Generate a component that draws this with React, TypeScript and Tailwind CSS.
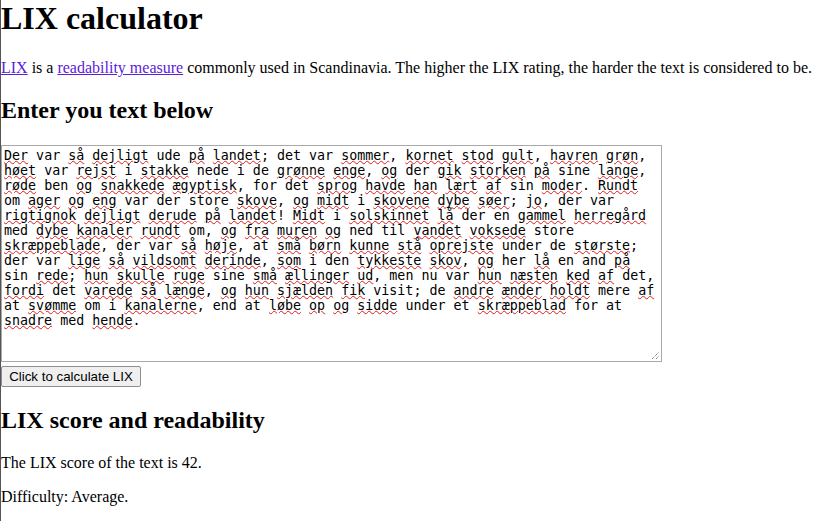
const sample = `Der var så dejligt ude på landet; det var sommer, kornet stod gult, havren grøn, høet var rejst i stakke nede i de grønne enge, og der gik storken på sine lange, røde ben og snakkede ægyptisk, for det sprog havde han lært af sin moder. Rundt om ager og eng var der store skove, og midt i skovene dybe søer; jo, der var rigtignok dejligt derude på landet! Midt i solskinnet lå der en gammel herregård med dybe kanaler rundt om, og fra muren og ned til vandet voksede store skræppeblade, der var så høje, at små børn kunne stå oprejste under de største; der var lige så vildsomt derinde, som i den tykkeste skov, og her lå en and på sin rede; hun skulle ruge sine små ællinger ud, men nu var hun næsten ked af det, fordi det varede så længe, og hun sjælden fik visit; de andre ænder holdt mere af at svømme om i kanalerne, end at løbe op og sidde under et skræppeblad for at snadre med hende.`;

// words the spell checker lets through (everything else gets the red squiggle)
const known = new Set([
  "var", "det", "i", "de", "ben", "for", "om", "store", "med", "her", "and",
  "under", "men", "at", "end", "et", "sin", "den", "visit", "mere", "sine",
  "til", "en", "der", "ude", "nede", "ned", "nu",
]);

function SpellText({ text }: { text: string }) {
  const parts = text.split(/(\p{L}+)/u);
  return (
    <>
      {parts.map((part, i) =>
        /\p{L}/u.test(part) && !known.has(part) ? (
          <span
            key={i}
            className="underline decoration-[#e21b1b] decoration-wavy decoration-[1px] underline-offset-[0px]"
          >
            {part}
          </span>
        ) : (
          <span key={i}>{part}</span>
        )
      )}
    </>
  );
}

export default function App() {
  return (
    <div className="min-h-[521px] border-l border-[#555] bg-white font-['Liberation_Serif',serif] text-black">
      <h1 className="mb-[22px] text-[32px] font-bold leading-[normal]">LIX calculator</h1>

      <p className="mb-4 text-base leading-[normal]">
        <a href="#" className="text-[#5b21d9] underline">
          LIX
        </a>{" "}
        is a{" "}
        <a href="#" className="text-[#5b21d9] underline">
          readability measure
        </a>{" "}
        commonly used in Scandinavia. The higher the LIX rating, the harder the text is considered to be.
      </p>

      <h2 className="mt-[20px] mb-[21px] text-2xl font-bold leading-[normal]">Enter you text below</h2>

      <div className="flex flex-col items-start">
        <div className="relative">
          <div
            role="textbox"
            aria-multiline="true"
            className="h-[217px] w-[661px] overflow-hidden whitespace-pre-wrap break-words border border-[#a9a9a9] p-[2px] font-['DejaVu_Sans_Mono',monospace] text-[13.33px] leading-[15px]"
          >
            <SpellText text={sample} />
          </div>
          <svg
            className="absolute right-[2px] bottom-[2px]"
            width="9"
            height="9"
            viewBox="0 0 9 9"
          >
            <path d="M1 8L8 1M5 8L8 5" stroke="#555" strokeWidth="1" strokeDasharray="1 1" />
          </svg>
        </div>
        <button className="mt-[4px] h-[21px] w-[140px] rounded-[2px] border border-[#8f8f8f] bg-[#efefef] px-[6px] font-['Liberation_Sans',sans-serif] text-[13.33px] leading-[normal] text-black">
          Click to calculate LIX
        </button>
      </div>

      <h2 className="mt-[20px] mb-[20px] text-2xl font-bold leading-[normal]">LIX score and readability</h2>

      <p className="mb-4 text-base leading-[normal]">The LIX score of the text is 42.</p>
      <p className="mb-4 text-base leading-[normal]">Difficulty: Average.</p>
    </div>
  );
}
